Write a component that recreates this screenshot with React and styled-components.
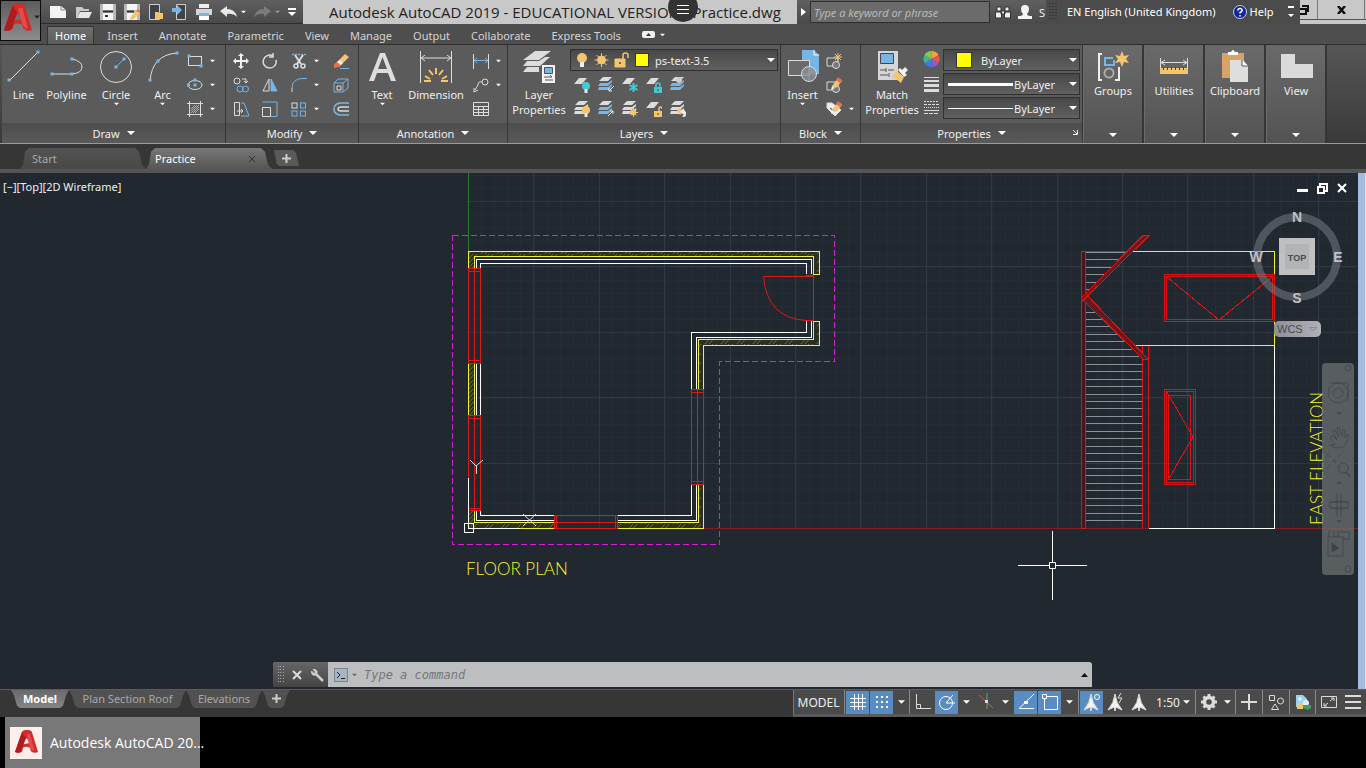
import React from "react";
import styled, { createGlobalStyle, css } from "styled-components";

const GlobalStyle = createGlobalStyle`
  * { box-sizing: border-box; }
  body { margin: 0; background: #000; font-family: "Noto Sans", "Open Sans", sans-serif; font-size: 11px; color: #efefef; }
  button, input, select { font: inherit; color: inherit; }
  button { background: none; border: 0; padding: 0; margin: 0; }
  svg { display: block; flex: none; }
`;

const W = "#dcdcdc";
const B = "#76b5e4";
const Y = "#f3c56f";

/* ---------- shell ---------- */
const Shell = styled.div`
  min-height: 100vh;
  display: flex;
  flex-direction: column;
`;
const Header = styled.header`
  display: grid;
  grid-template-columns: 41px minmax(0, 1fr);
  grid-template-rows: 24px 20px;
  background: #4e4e4e;
  position: relative;
`;
const LogoButton = styled.button`
  grid-row: 1 / 3;
  height: 41px;
  border: 1px solid #0c0c0c;
  background: linear-gradient(#5c5c5c, #8d8d8d);
  display: flex;
  align-items: center;
  padding: 0 0 8px 3px;
  gap: 2px;
`;
const TitleBar = styled.div`
  display: flex;
  background: #c8c8c8;
  overflow: hidden;
`;
const QuickAccess = styled.div`
  width: 262px;
  flex: none;
  display: flex;
  align-items: center;
  gap: 8px;
  padding-left: 8px;
  border-bottom: 1px solid #2c2c2c;
  background: linear-gradient(#5f5f5f, #4a4a4a);
`;
const Pair = styled.span`
  display: flex;
  align-items: center;
  gap: ${(p) => p.$gap || 4}px;
`;
const WindowTitle = styled.h1`
  flex: 1;
  margin: 0;
  padding-left: 26px;
  font-family: "Open Sans", sans-serif;
  font-size: 15px;
  font-weight: 400;
  line-height: 25px;
  color: #222;
  white-space: nowrap;
  overflow: hidden;
`;
const SearchArea = styled.div`
  display: flex;
  flex: none;
  width: 249px;
  background: linear-gradient(#606060, #4a4a4a);
  align-items: center;
  overflow: hidden;
`;
const SearchToggle = styled.button`
  width: 13px;
  flex: none;
  display: flex;
  justify-content: center;
`;
const SearchInput = styled.input`
  width: 180px;
  height: 22px;
  flex: none;
  border: 1px solid #2f2f2f;
  background: #6b6b6b;
  font-style: italic;
  padding: 0 3px;
  margin-right: 5px;
  &::placeholder { color: #b9b9b9; opacity: 1; }
`;
const LanguageBar = styled.div`
  width: 254px;
  flex: none;
  display: flex;
  align-items: center;
  background: #4b4b4b;
  padding-left: 3px;
  line-height: 24px;
  color: #fff;
  white-space: nowrap;
`;
const LanguageName = styled.button`
  margin-left: 9px;
`;
const HelpButton = styled.button`
  display: flex;
  align-items: center;
  gap: 3px;
  margin: 0 14px 0 17px;
`;
const WindowButtons = styled.div`
  display: flex;
  flex: none;
  width: 66px;
  height: 20px;
  border-bottom: 1px solid #555;
`;
const WindowButton = styled.button`
  width: ${(p) => p.$w}px;
  border-right: 1px solid #777;
  display: flex;
  align-items: center;
  justify-content: ${(p) => p.$align || "center"};
`;
const FloatingMenu = styled.button`
  position: absolute;
  left: 50%;
  top: -8px;
  transform: translateX(-50%);
  width: 30px;
  height: 30px;
  border-radius: 50%;
  background: #333;
  display: flex;
  align-items: center;
  justify-content: center;
  padding-top: 5px;
`;
const MenuTabs = styled.nav`
  display: flex;
  gap: 5px;
  padding-left: 6px;
  align-items: flex-end;
`;
const MenuTab = styled.button`
  height: 18px;
  padding: 0 8px;
  line-height: 15px;
  color: #d4d4d4;
  ${(p) => p.$active && css`
    background: linear-gradient(#6e6e6e, #5c5c5c);
    border: 1px solid #343434;
    border-bottom: 0;
    color: #fff;
    padding: 0 7px;
  `}
`;

/* ---------- ribbon ---------- */
const Ribbon = styled.div`
  display: flex;
  height: 100px;
  border-top: 1px solid #2f2f2f;
  border-bottom: 1px solid #9a9a9a;
  padding-left: 2px;
  background: linear-gradient(#565656, #3a3a3a);
  overflow: hidden;
`;
const Panel = styled.section`
  flex: none;
  width: ${(p) => p.$w}px;
  border-right: 1px solid #363636;
  display: flex;
  flex-direction: column;
  background: #5b5b5b;
`;
const PanelBody = styled.div`
  height: 78px;
  display: flex;
  padding-top: 4px;
`;
const PanelTitle = styled.button`
  flex: 1;
  display: flex;
  align-items: center;
  justify-content: center;
  gap: 7px;
  position: relative;
  background: linear-gradient(#4d4d4d, #5a5a5a);
`;
const Launcher = styled.span`
  position: absolute;
  right: 4px;
  top: 6px;
`;
const BigButton = styled.button`
  width: ${(p) => p.$w}px;
  flex: none;
  display: flex;
  flex-direction: column;
  align-items: center;
  line-height: 15px;
  white-space: nowrap;
  height: 72px;
  > svg:first-child { margin-bottom: 4px; }
`;
const ToolGrid = styled.div`
  display: grid;
  grid-template-columns: ${(p) => p.$cols};
  grid-auto-rows: 24px;
  align-content: start;
`;
const Tool = styled.button`
  display: flex;
  align-items: center;
  gap: 7px;
`;
const ComboBox = styled.label`
  width: ${(p) => p.$w}px;
  height: 22px;
  margin-bottom: 2px;
  border: 1px solid #303030;
  background: linear-gradient(#484848, #606060);
  display: flex;
  align-items: center;
  gap: ${(p) => p.$gap}px;
  padding: 0 2px 0 4px;
`;
const Picker = styled.select`
  appearance: none;
  border: 0;
  padding: 0;
  margin: 0;
  background: transparent;
  flex: 1;
  min-width: 0;
  outline: 0;
  option { color: #000; }
`;
const Swatch = styled.span`
  width: ${(p) => (p.$wide ? 16 : 14)}px;
  height: ${(p) => (p.$wide ? 16 : 14)}px;
  background: #ff0;
  border: 1px solid #333;
  flex: none;
  margin: ${(p) => (p.$wide ? "0 5px 0 8px" : "0 1px")};
`;
const LineSample = styled.span`
  width: 65px;
  height: ${(p) => p.$h}px;
  background: #fff;
  flex: none;
`;
const Stack = styled.div`
  display: flex;
  flex-direction: column;
`;
const IconStack = styled(Stack)`
  width: 20px;
  gap: 8px;
  padding-top: 1px;
`;
const SlimPanel = styled.button`
  flex: none;
  width: 61px;
  border-right: 2px solid #363636;
  border-left: 1px solid #6b6b6b;
  background: linear-gradient(#6a6a6a, #535353);
  display: flex;
  flex-direction: column;
  align-items: center;
  padding: 4px 0 6px;
  line-height: 16px;
  > svg:last-child { margin-top: auto; }
`;

/* ---------- document tabs ---------- */
const FileTabs = styled.nav`
  height: 29px;
  background: #363636;
  border-bottom: 4px solid #555;
  display: flex;
  align-items: flex-end;
  padding-left: 20px;
`;
const FileTab = styled.button`
  width: 126px;
  height: 21px;
  display: flex;
  align-items: center;
  justify-content: space-between;
  padding: 0 16px 0 ${(p) => (p.$active ? 9 : 12)}px;
  color: ${(p) => (p.$active ? "#fff" : "#a9a9a9")};
  background: ${(p) => (p.$active ? "linear-gradient(#777, #565656)" : "linear-gradient(#535353, #484848)")};
  clip-path: polygon(0 100%, 3px 80%, 5px 18%, 9px 0, 115px 0, 119px 18%, 122px 80%, 100% 100%);
`;
const FileTabAdd = styled.button`
  width: 25px;
  height: 16px;
  margin: 0 0 3px 2px;
  background: #5a5a5a;
  display: flex;
  align-items: center;
  justify-content: center;
  clip-path: polygon(0 0, 75% 0, 88% 15%, 100% 100%, 20% 100%, 10% 85%);
`;

/* ---------- drawing area ---------- */
const Canvas = styled.main`
  flex: 1;
  min-height: 516px;
  position: relative;
  background: #212830;
  overflow: hidden;
  border-right: 1px solid #d7e2f0;
`;
const Drawing = styled.svg`
  position: absolute;
  inset: 0;
  width: 100%;
  height: 100%;
`;
const ViewLabel = styled.div`
  position: absolute;
  left: 3px;
  top: 6px;
  line-height: 16px;
`;
const ScrollEdge = styled.div`
  position: absolute;
  right: 0;
  top: 0;
  bottom: 0;
  width: 7px;
  background: #a3bcdd;
`;
const DocButtons = styled.div`
  position: absolute;
  right: 18px;
  top: 10px;
  display: flex;
  gap: 9px;
`;
const ViewCube = styled.div`
  position: absolute;
  right: 21px;
  top: 36px;
`;
const WcsButton = styled.button`
  position: absolute;
  right: 44px;
  top: 148px;
  width: 47px;
  height: 16px;
  border-radius: 5px;
  background: linear-gradient(90deg, #8d9096, #b0b0b8);
  font-family: "Liberation Sans", sans-serif;
  color: #474b52;
  display: flex;
  align-items: center;
  gap: 6px;
  padding-left: 3px;
`;
const NavBar = styled.div`
  position: absolute;
  right: 11px;
  top: 190px;
  width: 32px;
  height: 212px;
  border-radius: 4px;
  background: rgba(110, 113, 115, 0.72);
`;
const CommandLine = styled.div`
  position: absolute;
  left: 20%;
  width: 60%;
  bottom: 2px;
  height: 25px;
  display: flex;
  background: #bcbec0;
  border-radius: 3px 3px 0 0;
  overflow: hidden;
  align-items: center;
`;
const CommandHandle = styled.div`
  width: 55px;
  height: 100%;
  background: linear-gradient(#666, #444);
  display: flex;
  align-items: center;
  gap: 8px;
  padding-left: 5px;
`;
const CommandInput = styled.input`
  flex: 1;
  border: 0;
  outline: 0;
  background: transparent;
  font-family: "DejaVu Sans Mono", monospace;
  font-style: italic;
  font-size: 12px;
  padding: 0 7px;
  color: #333;
  &::placeholder { color: #75777a; opacity: 1; }
`;
const CommandPrompt = styled.button`
  display: flex;
  align-items: center;
  gap: 4px;
  padding-left: 6px;
`;

/* ---------- bottom ---------- */
const BottomBar = styled.footer`
  height: 28px;
  display: flex;
  justify-content: space-between;
  background: #363636;
  border-top: 1px solid #5c5c5c;
`;
const LayoutTabs = styled.nav`
  display: flex;
  padding-left: 11px;
`;
const LayoutTab = styled.button`
  height: 18px;
  width: ${(p) => p.$w}px;
  display: flex;
  align-items: center;
  justify-content: center;
  padding-bottom: 2px;
  color: ${(p) => (p.$active ? "#fff" : "#a8a8a8")};
  font-weight: ${(p) => (p.$active ? 700 : 400)};
  background: ${(p) => (p.$active ? "linear-gradient(#6a6a6a, #858585)" : "#515151")};
  clip-path: polygon(0 0, 100% 0, calc(100% - 3px) 30%, calc(100% - 6px) 88%, calc(100% - 9px) 100%, 9px 100%, 6px 88%, 3px 30%);
`;
const StatusBar = styled.div`
  display: flex;
  background: #4a4a4a;
  border-left: 1px solid #777;
  border-bottom: 3px solid #5a5a5a;
  align-items: center;
  gap: 1px;
  padding-right: 2px;
`;
const StatusButton = styled.button`
  width: ${(p) => p.$w || 23}px;
  height: 23px;
  background: ${(p) => (p.$on ? "#5a8cc4" : "transparent")};
  display: flex;
  align-items: center;
  justify-content: center;
  gap: 3px;
  font-size: 12px;
`;
const Separator = styled.span`
  width: 1px;
  align-self: stretch;
  background: #8a8a8a;
`;
const Taskbar = styled.div`
  height: 51px;
  background: #000;
  padding-left: 5px;
  display: flex;
`;
const TaskButton = styled.button`
  width: 195px;
  background: #787878;
  display: flex;
  align-items: center;
  gap: 8px;
  padding-left: 5px;
  font-family: "Open Sans", sans-serif;
  font-size: 14px;
  color: #fff;
  white-space: nowrap;
`;

/* ---------- icons ---------- */
const Icon = ({ w = 16, h = w, vb, children, ...rest }) => (
  <svg width={w} height={h} viewBox={vb || `0 0 ${w} ${h}`} fill="none" stroke={W} aria-hidden="true" {...rest}>
    {children}
  </svg>
);
const Caret = ({ w = 7, color = "#fff" }) => (
  <Icon w={w} h={4} vb="0 0 8 4" stroke="none"><path d="M0 0h8L4 4z" fill={color} /></Icon>
);
const Plus = () => <Icon w={9} stroke="#ccc" strokeWidth="2"><path d="M4.500 0v9M0 4.500h9" /></Icon>;
const Dot = ({ x, y }) => <rect x={x - 1.5} y={y - 1.5} width="3" height="3" fill={B} stroke="none" />;
const ALogo = ({ s = 26 }) => (
  <Icon w={s} vb="0 0 26 26" stroke="none">
    <path d="M0 25 8 2q1-2 4-2h3q3 0 4 2l7 23q-4 2-8-1l-1-4q-5-2-8 0l-1 4q-3 3-8 1zM12.500 9l-3 7 6-1q2-2-3-6z" fill="#cf2a2c" fillRule="evenodd" />
    <path d="M0 25 8 2q3 6 4.500 7l-3 7-2 8q-3 3-7.500 1z" fill="#b01b20" />
    <path d="m13 5 4 15 3 4 2-1-5-19z" fill="#e5494a" />
  </Icon>
);
const LayerStack = ({ blue, children, one }) => {
  const c = blue ? B : W;
  return (
    <Icon stroke="#eee">
      {one
        ? <path d="M5 1h8L8 7H0z" fill={W} stroke="none" />
        : <g stroke="none"><path d="M5 0h9l-4 4H1z" fill={W} /><path d="M2 6h8l4-3v2l-4 4H0z" fill={c} /><path d="M1 10h9l4-3v2l-4 4H0z" fill={c} /></g>}
      {children}
    </Icon>
  );
};
const Bulb = ({ c = Y }) => <g stroke="none"><circle cx="12" cy="9" r="4" fill={c} /><path d="M10.500 12h3v4h-3z" fill="#e8e8e8" /></g>;
const SunSmall = () => <g stroke={Y}><circle cx="11.500" cy="11.500" r="2.500" fill={Y} /><path d="M11.500 7v9M7 11.500h9M8.500 8.500l6 6M14.500 8.500l-6 6" /></g>;
const Lock = ({ c, open }) => <><path d={open ? "M13 10V8q0-2 1.500-2T16 8" : "M10 10V8q0-2 2-2t2 2v2"} stroke={c} strokeWidth="1.500" /><rect x="8" y="10" width="8" height="6" fill={c} stroke="none" /><path d="M12 12v2" stroke="#444" /></>;
const Pencil = () => <><path d="m6 9 6-8 4 3-6 7z" fill={Y} stroke="none" /><path d="m12 0 4 3-2 3-4-3z" fill="#e46b5c" stroke="none" /><path d="m6 9-1 4 4-2z" fill="#eee" stroke="none" /></>;
const Annot = ({ children }) => (
  <Icon w={20}>
    <path d="M9 2Q8 11 2 18l6-3 1 4 1-4 6 3Q10 11 9 2z" fill="#f3f3f3" />
    {children}
  </Icon>
);

const Combo = ({ label, w, gap, value, children }) => (
  <ComboBox $w={w} $gap={gap}>
    {children}
    <Picker aria-label={label} defaultValue={value}><option>{value}</option></Picker>
    <Caret w={8} />
  </ComboBox>
);

/* ---------- top sections ---------- */
function Top() {
  return (
    <Header>
      <LogoButton aria-label="Application menu"><ALogo s={28} /><Caret w={6} color="#222" /></LogoButton>
      <TitleBar>
        <QuickAccess>
          <button aria-label="New"><Icon w={18} h={16} stroke="none"><path d="M1 2h11l5 4v8H1z" fill="#f4f4f4" /><path d="M12 2v4h5" stroke="#888" /></Icon></button>
          <button aria-label="Open"><Icon w={17} h={16} stroke="none"><path d="M1 3h6l2 2h5v2H5l-3 7H1z" fill="#c9c9c9" /><path d="M5 8h12l-3 6H2z" fill="#e6e6e6" /></Icon></button>
          <button aria-label="Save"><Icon w={16} stroke="none"><path d="M0 0h16v16H0z" fill="#b9b9b9" /><path d="M3 0h10v6H3zM3 9h10v7H3z" fill="#f6f6f6" /><path d="M3 7.500h10M5 12h3" stroke="#333" strokeWidth="2" /></Icon></button>
          <button aria-label="Save as"><Icon w={16} stroke="none"><path d="M0 0h16v16H0z" fill="#b9b9b9" /><path d="M3 0h10v6H3zM3 9h10v7H3z" fill="#f6f6f6" /><path d="M3 7.500h7" stroke="#333" strokeWidth="2" /><path d="m7 12 6-6 3 3-6 6-4 1z" fill={Y} /><path d="m12 7 2-2 2 2v2z" fill="#e46b5c" /></Icon></button>
          <button aria-label="Open from mobile"><Icon w={16} stroke="none"><path d="M1.500 0.500h10v15h-10z" stroke="#ccc" fill="#3f4246" /><path d="M7 8h3l1 1h4v6H7z" fill={Y} /></Icon></button>
          <button aria-label="Save to mobile"><Icon w={16} stroke="none"><path d="M4.500 0.500h9v15h-9z" stroke="#ccc" fill="#3f4246" /><path d="M0 4h5V1l5 5-5 5V8H0z" fill={B} /></Icon></button>
          <button aria-label="Plot"><Icon w={16} stroke="none"><path d="M3 0h10v4H3z" fill="#eee" /><path d="M0 5h16v6H0z" fill="#d6d6d6" /><path d="M3 9h10v3H3z" fill={B} /><path d="M3 12h10v4H3z" fill="#fff" /></Icon></button>
          <Pair><button aria-label="Undo"><Icon w={17} h={14} stroke="none"><path d="M0 6 7 1v3q8 0 10 8-4-4-10-3v3z" fill="#e9e9e9" /></Icon></button><Caret w={5} /></Pair>
          <Pair><button aria-label="Redo"><Icon w={17} h={14} stroke="none"><path d="m17 6-7-5v3Q2 4 0 12q4-4 10-3v3z" fill="#7b7b7b" /></Icon></button><Caret w={5} color="#999" /></Pair>
          <button aria-label="Customise"><Icon w={8} h={8} stroke="none"><path d="M0 0h8v2H0zM0 4h8L4 8z" fill="#fff" /></Icon></button>
        </QuickAccess>
        <WindowTitle>Autodesk AutoCAD 2019 - EDUCATIONAL VERSION - Practice.dwg</WindowTitle>
        <SearchArea>
          <SearchToggle aria-label="Toggle search"><Icon w={5} h={8} stroke="none"><path d="M0 0v8l5-4z" fill="#fff" /></Icon></SearchToggle>
          <SearchInput aria-label="Search help" placeholder="Type a keyword or phrase" />
          <Pair $gap={7}>
            <button aria-label="Find"><Icon w={16}><path d="M2 3h4v4H2zM10 3h4v4h-4zM.500 8h6v6h-6zM9.500 8h6v6h-6zM6 7h4v3H6z" fill="#eee" stroke="#333" /></Icon></button>
            <button aria-label="Account"><Icon w={14} h={16} stroke="none"><path d="M7 1q4 0 4 4 0 3-2 5 0 2 5 2v3H0v-3q5 0 5-2-2-2-2-5 0-4 4-4z" fill="#f4f4f4" /></Icon></button>
            <span>S</span>
          </Pair>
        </SearchArea>
        <LanguageBar>
          <Icon w={9} h={20} stroke="#222" strokeDasharray="1 2"><path d="M1 1v18M4 1v18M7 1v18" /></Icon>
          <LanguageName>EN English (United Kingdom)</LanguageName>
          <HelpButton>
            <Icon w={14} stroke="none"><circle cx="7" cy="7" r="6.500" fill="#13259c" stroke="#c9cde8" /><path d="M4.800 5.500Q5 3.500 7 3.500t2.200 2Q9.200 6.500 7 7.500v1M7 10v1.500" stroke="#fff" strokeWidth="1.500" /></Icon>
            Help
          </HelpButton>
          <Icon w={6} h={14} stroke="none"><path d="M0 1h6v2H0zM0 9h6l-3 3z" fill="#fff" /></Icon>
        </LanguageBar>
        <WindowButtons>
          <WindowButton $w={18} $align="flex-start" aria-label="Restore"><Icon w={9} h={10} stroke="#111" strokeWidth="2"><path d="M0 4h6v5H0M2 1h6v6" /></Icon></WindowButton>
          <WindowButton $w={47} aria-label="Close"><Icon w={9} h={8} stroke="#111" strokeWidth="2.500"><path d="m1 0 7 8M8 0 1 8" /></Icon></WindowButton>
        </WindowButtons>
      </TitleBar>
      <MenuTabs>
        {["Home", "Insert", "Annotate", "Parametric", "View", "Manage", "Output", "Collaborate", "Express Tools"].map((t, i) => (
          <MenuTab key={t} $active={i === 0}>{t}</MenuTab>
        ))}
        <MenuTab aria-label="Minimise ribbon">
          <Pair $gap={5}>
            <Icon w={13} h={18} stroke="none"><rect y="5" width="13" height="7" rx="2" fill="#f0f0f0" /><path d="M4 10h5L6.500 7z" fill="#333" /></Icon>
            <Caret w={5} />
          </Pair>
        </MenuTab>
      </MenuTabs>
      <FloatingMenu aria-label="Menu"><Icon w={12} h={9} stroke="#fff"><path d="M0 .500h12M0 4.500h12M0 8.500h12" /></Icon></FloatingMenu>
    </Header>
  );
}

const PanelFooter = ({ children, launcher }) => (
  <PanelTitle>
    {children}<Caret w={8} />
    {launcher && <Launcher><Icon w={6}><path d="M1 1l4 4M5.500 1v4.500H1" stroke="#eee" /></Icon></Launcher>}
  </PanelTitle>
);

function RibbonPanels() {
  return (
    <Ribbon>
      <Panel $w={224}>
        <PanelBody>
          <BigButton $w={43}><Icon w={34}><path d="M2 32 31 3" /><Dot x={2} y={31} /><Dot x={31} y={3} /></Icon>Line</BigButton>
          <BigButton $w={43}><Icon w={34}><path d="M2 25h20q10-1 10-7T22 10" /><Dot x={2} y={25} /><Dot x={22} y={25} /><Dot x={22} y={10} /></Icon>Polyline</BigButton>
          <BigButton $w={56}><Icon w={34}><circle cx="17" cy="18" r="15.500" /><path d="m17 18 8-8" stroke={B} /><Dot x={17} y={18} /><Dot x={25} y={10} /></Icon>Circle<Caret w={5} /></BigButton>
          <BigButton $w={37}><Icon w={34}><path d="M4 32Q6 6 31 4" /><Dot x={4} y={31} /><Dot x={12} y={12} /><Dot x={31} y={4} /></Icon>Arc<Caret w={5} /></BigButton>
          <ToolGrid $cols="6px 38px">
            <i /><Tool aria-label="Rectangle"><Icon><rect x="1.500" y="3.500" width="13" height="9" /><Dot x={2} y={3} /><Dot x={14} y={13} /></Icon><Caret w={5} /></Tool>
            <i /><Tool aria-label="Ellipse"><Icon><ellipse cx="8" cy="8" rx="7" ry="4.500" /><Dot x={8} y={8} /><Dot x={1.500} y={8} /><Dot x={8} y={3} /></Icon><Caret w={5} /></Tool>
            <i /><Tool aria-label="Hatch"><Icon><path d="M2.500 0v16M13.500 0v16M0 2.500h16M0 13.500h16" /><path d="m4 8 4-4M4 12l8-8M8 12l4-4M4 10l6-6M6 12l6-6" stroke={B} /></Icon><Caret w={5} /></Tool>
          </ToolGrid>
        </PanelBody>
        <PanelFooter>Draw</PanelFooter>
      </Panel>

      <Panel $w={133}>
        <PanelBody>
          <ToolGrid $cols="7px 29px 29px 42px 26px">
            <i /><Tool aria-label="Move"><Icon stroke="none"><path d="m8 0 3 3H9v4h4V5l3 3-3 3V9H9v4h2l-3 3-3-3h2V9H3v2L0 8l3-3v2h4V3H5z" fill="#f2f2f2" /></Icon></Tool>
            <Tool aria-label="Rotate"><Icon strokeWidth="1.500"><path d="M11 3a6.500 6.500 0 1 0 3 4M11 0v4H7" /></Icon></Tool>
            <Tool aria-label="Trim"><Icon strokeWidth="1.500"><path d="M1 1.500h14" stroke={B} strokeDasharray="2 1" /><path d="m4 2 6 9M12 2l-6 9" strokeWidth="2" /><circle cx="5" cy="13" r="2" /><circle cx="12" cy="13" r="2" /></Icon><Caret w={5} /></Tool>
            <Tool aria-label="Erase"><Icon stroke="none"><path d="M1 12 12 1l4 3L6 14z" fill={Y} /><path d="m1 12 3-3 4 3-2 2-5 1z" fill="#e86a58" /><path d="m4 9 3-2 3 3-2 2z" fill="#eee" /><path d="M7 15.500h9" stroke={B} /></Icon></Tool>
            <i /><Tool aria-label="Copy"><Icon><circle cx="4" cy="4" r="3" /><path d="M9 2h4v4m-2-2 2 2 2-2" /><circle cx="7" cy="12" r="3" stroke={B} /><circle cx="12.500" cy="12" r="3" stroke={B} /></Icon></Tool>
            <Tool aria-label="Mirror"><Icon><path d="M7 2v12H1z" /><path d="M9 2v12h6z" fill={B} stroke={B} /></Icon></Tool>
            <Tool aria-label="Fillet"><Icon><path d="M1 15v-4" stroke={W} /><path d="M1 11q0-9 10-9.500h5" stroke={B} /></Icon><Caret w={5} /></Tool>
            <Tool aria-label="Explode"><Icon stroke={B}><path d="M1 6h9v9H1zM1 6l4-4h10l-5 4M10 15l5-4V2" /><path d="M4 9h4v4H4z" stroke={W} /></Icon></Tool>
            <i /><Tool aria-label="Stretch"><Icon><path d="M1.500 1.500h5v13h-5zM4 10h6M8 8l2 2-2 2" /><path d="M8 2h3l5 13H8" stroke={B} /></Icon></Tool>
            <Tool aria-label="Scale"><Icon><path d="M.500 1h14.500v14.500H9" stroke={B} /><path d="M.500 6.500h8v9h-8z" /></Icon></Tool>
            <Tool aria-label="Array"><Icon><rect x="1" y="2" width="5" height="5" /><g stroke={B}><rect x="9.500" y="2" width="5" height="5" /><rect x="1" y="10" width="5" height="5" /><rect x="9.500" y="10" width="5" height="5" /></g></Icon><Caret w={5} /></Tool>
            <Tool aria-label="Offset"><Icon stroke={B} strokeWidth="1.500"><path d="M16 2H7Q1 3 1 8t6 6h9" /><path d="M16 6H8Q5 6 5 8t3 2h8" stroke={W} /></Icon></Tool>
          </ToolGrid>
        </PanelBody>
        <PanelFooter>Modify</PanelFooter>
      </Panel>

      <Panel $w={149}>
        <PanelBody>
          <BigButton $w={46}><Icon w={34} stroke="none"><path d="M4 32 15 4h5l11 28h-5l-3-8H12l-3 8zm9-12h9L17.500 8z" fill="#dedede" fillRule="evenodd" /></Icon>Text<Caret w={5} /></BigButton>
          <BigButton $w={62}><Icon w={34}><path d="M1.500 2v32M32.500 2v32M2 9h30M6 6 2 9l4 3M28 6l4 3-4 3" /><path d="M17 19v6M10 21l4 5M24 21l-4 5M6 27l5 3M28 27l-5 3M5 32h7M22 32h7" stroke={Y} strokeWidth="2" /></Icon>Dimension</BigButton>
          <ToolGrid $cols="6px 34px">
            <i /><Tool aria-label="Linear"><Icon><path d="M.500 1v15M15.500 1v15" /><path d="M1 7.500h14M4 5 1 7.500 4 10M12 5l3 2.500L12 10" stroke={B} /></Icon><Caret w={5} /></Tool>
            <i /><Tool aria-label="Leader"><Icon><circle cx="12" cy="5" r="3" /><path d="M9 5Q5 4 5 8l-3 5M1 11v4l4-2" /></Icon><Caret w={5} /></Tool>
            <i /><Tool aria-label="Table"><Icon><path d="M.500 1.500h15v13H.500zM.500 5.500h15M.500 8.500h15M.500 11.500h15M5.500 5v10M10.500 5v10" /></Icon></Tool>
          </ToolGrid>
        </PanelBody>
        <PanelFooter>Annotation</PanelFooter>
      </Panel>

      <Panel $w={273}>
        <PanelBody>
          <BigButton $w={62}>
            <Icon w={34} stroke="none"><path d="M13 2h16l-12 9H1zM5 12h12l6-4h5l-10 9H1zM5 18h12v5H1z" fill="#dcdcdc" /><path d="M20 16h13v18H20z" fill="#f4f4f4" /><path d="M22.500 18.500h8v6h-8z" fill={B} stroke="#456" /><path d="M22 28h8M28 26l2 2M23 31h8" stroke="#555" /></Icon>
            <span>Layer<br />Properties</span>
          </BigButton>
          <Stack>
            <Combo label="Layer" w={208} gap={5} value="ps-text-3.5">
              <Icon w={14} h={16} stroke="none"><circle cx="7" cy="6" r="5" fill={Y} /><path d="M5 10h4v5H5z" fill="#eee" /></Icon>
              <Icon w={15} h={16} stroke={Y}><circle cx="7.500" cy="8" r="4" fill={Y} /><path d="M7.500 1v14M.500 8h14M2.500 3l10 10M12.500 3l-10 10" /></Icon>
              <Icon w={15} h={16} stroke={Y}><path d="M9 7V3q0-2 2.500-2T14 3v3" strokeWidth="1.500" /><path d="M1 7h10v8H1z" fill={Y} /><circle cx="6" cy="11" r="1" fill="#444" stroke="none" /></Icon>
              <Swatch />
            </Combo>
            <ToolGrid $cols="4px repeat(5, 24px)">
              <i /><Tool aria-label="Layer off"><LayerStack one><Bulb c="#45c8cf" /></LayerStack></Tool>
              <Tool aria-label="Isolate"><LayerStack blue><path d="m16 9-5 5m0-3v3h3" /></LayerStack></Tool>
              <Tool aria-label="Freeze"><LayerStack one><g stroke="#45c8cf" strokeWidth="2"><path d="M11.500 6v9M7.500 8l8 5M15.500 8l-8 5" /></g></LayerStack></Tool>
              <Tool aria-label="Lock"><LayerStack one><Lock c="#45c8cf" /></LayerStack></Tool>
              <Tool aria-label="Make current"><LayerStack blue><circle cx="9" cy="3" r="3" fill="#ccc" stroke="none" /></LayerStack></Tool>
              <i /><Tool aria-label="Layers on"><LayerStack><Bulb /></LayerStack></Tool>
              <Tool aria-label="Unisolate"><LayerStack blue><path d="m10 15 5-5m-3 0h3v3" /></LayerStack></Tool>
              <Tool aria-label="Thaw"><LayerStack><SunSmall /></LayerStack></Tool>
              <Tool aria-label="Unlock"><LayerStack one><Lock c={Y} open /></LayerStack></Tool>
              <Tool aria-label="Match layer"><LayerStack><path d="m7 9 3-2 3 4-3 3z" fill={Y} stroke="none" /><path d="m11 10 3 3m-1-4 3 4-3 3" strokeWidth="2" /></LayerStack></Tool>
            </ToolGrid>
          </Stack>
        </PanelBody>
        <PanelFooter>Layers</PanelFooter>
      </Panel>

      <Panel $w={80}>
        <PanelBody>
          <BigButton $w={43}><Icon w={34}><path d="M16 1h12l5 5v19H16z" fill={B} stroke="none" /><path d="M28 1v5h5" stroke="#fff" /><path d="M2.500 11.500h21v15h-21z" fill="#6b6b6b" /><circle cx="23" cy="25" r="7.500" fill="#8b8f93" fillOpacity=".8" /><path d="M16 25h14M23 18v14" stroke="#999" /></Icon>Insert<Caret w={5} /></BigButton>
          <ToolGrid $cols="2px 34px">
            <i /><Tool aria-label="Create block"><Icon><path d="M1 5h11v8H1z" /><circle cx="10" cy="12" r="3.500" fill="#777" /><path d="M12 0v8M8 4h8M9 1l6 6M15 1 9 7" stroke={Y} /></Icon></Tool>
            <i /><Tool aria-label="Edit block"><Icon><path d="M1 5h11v8H1z" /><circle cx="10" cy="12" r="3.500" fill="#777" /><Pencil /></Icon></Tool>
            <i /><Tool aria-label="Attributes"><Icon><path d="M1 2h5l9 7-6 6-8-8z" fill="#eee" /><path d="m4 7 4 3 4-2" stroke="#333" /><Pencil /></Icon><Caret w={5} /></Tool>
          </ToolGrid>
        </PanelBody>
        <PanelFooter>Block</PanelFooter>
      </Panel>

      <Panel $w={222}>
        <PanelBody>
          <BigButton $w={62}>
            <Icon w={34} stroke="none"><path d="M3 2h20v29H3z" fill="#d6d6d6" /><path d="M5.500 4.500h13v10h-13z" fill={B} stroke="#445" /><path d="M5 21h6M13 21h6M5 26h8M11 19v4M14 24v4" stroke="#555" /><path d="m17 27 5-5 7 6-3 6z" fill={Y} /><path d="m23 21 2-2 2 2 3-3 3 3-3 3 2 2-3 2z" fill="#f2f2f2" /></Icon>
            <span>Match<br />Properties</span>
          </BigButton>
          <IconStack>
            <Icon w={17} h={18} stroke="none"><path d="M8.500 9V1a8 8 0 0 1 7 4z" fill="#f4a340" /><path d="m8.500 9 7-4a8 8 0 0 1 0 8z" fill="#e8554d" /><path d="m8.500 9 7 4a8 8 0 0 1-7 4z" fill="#8e5bd0" /><path d="M8.500 9v8a8 8 0 0 1-7-4z" fill="#3f7be0" /><path d="m8.500 9-7 4a8 8 0 0 1 0-8z" fill="#3cb98c" /><path d="m8.500 9-7-4a8 8 0 0 1 7-4z" fill="#8fc64a" /></Icon>
            <Icon w={17} h={16}><path d="M1 1.500h15" /><path d="M1 5h15" strokeWidth="2" /><path d="M1 9.500h15" strokeWidth="3" /><path d="M1 14.500h15" strokeWidth="3" /></Icon>
            <Icon w={17} h={16}><path d="M1 1.500h15" strokeDasharray="2 1" /><path d="M1 4.500h15" strokeDasharray="3 1" /><path d="M1 7.500h15" strokeDasharray="1 1" /><path d="M1 10.500h15" /><path d="M1 13.500h15" strokeDasharray="4 1" /></Icon>
          </IconStack>
          <Stack>
            <Combo label="Colour" w={137} value="ByLayer" gap={4}><Swatch $wide /></Combo>
            <Combo label="Lineweight" w={137} value="ByLayer" gap={1}><LineSample $h={3} /></Combo>
            <Combo label="Linetype" w={137} value="ByLayer" gap={1}><LineSample $h={1} /></Combo>
          </Stack>
        </PanelBody>
        <PanelFooter launcher>Properties</PanelFooter>
      </Panel>

      <SlimPanel>
        <Icon w={34}><path d="M6 5H3v26h3M19 31h4V18" strokeWidth="2" stroke="#eee" /><path d="M17 9h-8v7h9v-5" stroke={B} strokeWidth="2" /><circle cx="13" cy="24" r="4.500" stroke="#aaa" strokeWidth="2" /><path d="m26 2 2 5 5-1-3 4 3 4-5-1-2 5-2-5-5 1 3-4-3-4 5 1z" fill={Y} stroke="none" /></Icon>
        Groups<Caret w={8} />
      </SlimPanel>
      <SlimPanel>
        <Icon w={34}><path d="M3.500 9v14M30.500 9v14M4 13.500h26M8 11l-4 2.500L8 16M26 11l4 2.500-4 2.500" /><path d="M3 19h28v6H3z" fill={Y} stroke="none" /><path d="M6.500 18v3M10.500 18v3M14.500 18v3M18.500 18v3M22.500 18v3M26.500 18v3" stroke="#444" /></Icon>
        Utilities<Caret w={8} />
      </SlimPanel>
      <SlimPanel>
        <Icon w={34} stroke="none"><path d="M4 4h22v25H4z" fill="#d6a468" /><path d="M10 3h3q2-4 4 0h3v3H10z" fill="#fff" /><path d="M12 11h13l5 6v16H12z" fill="#dedede" /><path d="M24 11v6h6" stroke="#555" fill="#fff" /></Icon>
        Clipboard<Caret w={8} />
      </SlimPanel>
      <SlimPanel>
        <Icon w={34} stroke="none"><path d="M2 5h14v10h18v14H2z" fill="#dadada" /></Icon>
        View<Caret w={8} />
      </SlimPanel>
    </Ribbon>
  );
}

/* ---------- drawing ---------- */
const steps = (from, to, step) => {
  const out = [];
  for (let v = from; v <= to; v += step) out.push(Math.round(v) + 0.5);
  return out;
};
const grid = (xs, ys) => xs.map((x) => `M${x} 0V355`).join("") + ys.map((y) => `M468 ${y}H1358`).join("");
const siding = steps(79, 350, 7.45).map((y) => {
  const reach = Math.min(56, Math.abs(y - 125.5) - 5);
  return reach > 2 ? `M1086 ${y}h${reach}` : "";
}).join("");

function FloorPlan() {
  return (
    <g shapeRendering="crispEdges">
      <path d="M452.500 62.500H834.500V188.500H719.500V371.500H452.500z" stroke="#d222d2" strokeDasharray="6 3" />
      <g fill="url(#hatch)" stroke="none">
        <path d="M468 78H820V102H813V84H474V96H468zM813 148h7v25H704v44h-5v-51H813zM468 190h6v53h-6zM699 312h5v44H618v-6h81zM468 338h6v12h81v6h-87z" />
      </g>
      <path d="M468.500 96V78.500H819.500V101.500H813.500V83.500H474.500V96M813 148.500h6.500v24H703.500V216M813.500 148V166.500H698.500V216M468.500 190v53M474.500 190v53M703.500 312V355.500H618M698.500 312V349.500H618M554 355.500H520M554 349.500H474.500V338" stroke="#f0f03c" />
      <path d="M476.500 96V86.500H811.500V101M480.500 96V90.500H806.500V101M811.500 148V164.500H696.500V216M806.500 148V159.500H691.500V216M476.500 190v53M480.500 190v53M696.500 312V347.500H618M691.500 312V342.500H618M554 347.500H476.500V338M554 342.500H480.500V338" stroke="#fff" />
      <g stroke="#dd1a1a">
        <path d="M468.500 95.500h12v95h-12zM474.500 95v95M468 98.500h12M468 187.500h12" />
        <path d="M468.500 242.500h12v95h-12zM474.500 242v95M468 245.500h12M468 335.500h12" />
        <path d="M691.500 216.500h12v95h-12zM697.500 216v95M691 219.500h12M691 308.500h12" />
        <path d="M554.500 342.500h63v13h-63zM554 349.500h63M556.500 342v13M615.500 342v13" />
        <path d="M806 102.500h7v45h-7M813 103.500H763.500" />
        <path d="M763.500 103.500Q767 145 806 147.500" shapeRendering="auto" />
      </g>
      <path d="M468.500 305V355.500H520M464.500 350.500h9v9h-9z" stroke="#fff" />
      <path d="m523 341 13 12M536 341l-13 12M470 287l6 6 7-6M476.500 293v8" stroke="#ddd" shapeRendering="auto" />
    </g>
  );
}

function Elevation() {
  return (
    <g shapeRendering="crispEdges">
      <path d={siding} stroke="#8d9196" />
      <path d="M1132 78.500H1274.500V172.500H1132" stroke="#f0f020" />
      <path d="M1274.500 172V355.500H1149" stroke="#fff" />
      <g stroke="#dd1414">
        <path d="M1128 78.500H1081M1081.500 78.500h4v277h-4z" fill="#4c151b" />
        <path d="M1142.500 173V355M1148.500 173V355" />
        <path d="M1081 125l62-62.500h6l-67 66M1086 121l62 65h-5l-62-61" fill="#651920" />
        <path d="M1164.500 101.500h110v47h-110zM1166.500 103.500h106v43h-106zM1167 104l52 43 53-43" />
        <path d="M1164.500 216.500h31v95h-31zM1166.500 218.500h27v91h-27zM1168.500 222.500h22v84h-22zM1167 219l26 45-25 43" />
      </g>
    </g>
  );
}

function Model() {
  return (
    <Drawing fill="none" role="img" aria-label="Floor plan and east elevation">
      <defs>
        <pattern id="hatch" width="16" height="9" patternUnits="userSpaceOnUse">
          <rect width="16" height="9" fill="#2b3021" /><path d="M1 9 9 0M5 9l8-9" stroke="#696c40" />
        </pattern>
      </defs>
      <path d={grid(steps(468, 1357, 13.1), steps(2, 355, 13.1))} stroke="#242c36" shapeRendering="crispEdges" />
      <path d={grid(steps(468, 1357, 65.4), steps(28, 355, 65.4))} stroke="#2f3845" shapeRendering="crispEdges" />
      <path d="M704 355.500H1358" stroke="#7c2026" />
      <path d="M468.500 0V79" stroke="#2c7a2e" />
      <FloorPlan />
      <Elevation />
      <g fill="#f6f62a" fontFamily="Lato, sans-serif" fontWeight="300" fontSize="17">
        <text x="466" y="402">FLOOR PLAN</text>
        <text transform="translate(1323 352) rotate(-90)">EAST ELEVATION</text>
      </g>
      <path d="M1018 392.500h31M1056 392.500h31M1052.500 358v31M1052.500 396v31M1049.500 389.500h6v6h-6z" stroke="#fff" />
    </Drawing>
  );
}

function Workspace() {
  return (
    <Canvas>
      <Model />
      <ViewLabel>[−][Top][2D Wireframe]</ViewLabel>
      <ScrollEdge />
      <DocButtons>
        <button aria-label="Minimise drawing"><Icon w={11} h={11} stroke="#fff" strokeWidth="3"><path d="M0 7.500h11" /></Icon></button>
        <button aria-label="Restore drawing"><Icon w={11} h={11} stroke="#fff" strokeWidth="2"><path d="M1 4h6v6H1zM3 3V1h7v7H8" /></Icon></button>
        <button aria-label="Close drawing"><Icon w={10} h={11} stroke="#fff" strokeWidth="2"><path d="m1 1 8 8M9 1 1 9" /></Icon></button>
      </DocButtons>
      <ViewCube>
        <Icon w={96} stroke="none" fontFamily="Liberation Sans, sans-serif" fontWeight="700" fontSize="14" textAnchor="middle">
          <circle cx="49" cy="48" r="40" stroke="#767a82" strokeOpacity=".55" strokeWidth="8" />
          <path d="M31 29h36v37H31z" fill="#bfc0c2" /><path d="M37 35h24v25H37z" fill="#b3b4b6" />
          <text x="49" y="52" fontSize="9" fill="#444b55">TOP</text>
          <g fill="#bfc2c6"><text x="49" y="13">N</text><text x="49" y="94">S</text><text x="8" y="53">W</text><text x="90" y="53">E</text></g>
        </Icon>
      </ViewCube>
      <WcsButton>WCS<Icon w={8} h={4} stroke="#8a8d96"><path d="M0 .500h8L4 3.500z" /></Icon></WcsButton>
      <NavBar>
        <Icon w={32} h={212} stroke="#3f4448" strokeOpacity=".75">
          <circle cx="26" cy="5" r="3" /><circle cx="16" cy="30" r="10" /><circle cx="16" cy="30" r="5" /><path d="M8 20h18v18" />
          <path d="m13 82-5-8 3-1 4 4-5-9 2-2 5 8-2-9 2-1 3 9 1-7 2 1 0 8 3-4 1 1-3 8q-2 5-8 5-5 0-8-3z" />
          <path d="m5 91 14 14M5 105l14-14" strokeDasharray="5 3" /><circle cx="21" cy="105" r="5" /><path d="m24 109 4 5" strokeWidth="2" />
          <ellipse cx="17" cy="142" rx="10" ry="4" /><path d="M15 130v24M19 130v24M7 139h20M7 145h20" />
          <rect x="6" y="174" width="15" height="19" /><path d="m10 180 7 5-7 4z" fill="#3f4448" /><path d="M7 168v6M12 168v6M16 168v6M17 169h10v7H21" />
          <circle cx="26" cy="206" r="3" /><path d="M15 50h4M15 120h4M15 158h4" strokeWidth="2" />
        </Icon>
      </NavBar>
      <CommandLine>
        <CommandHandle>
          <Icon w={6} h={17} stroke="#aaa" strokeDasharray="1 2"><path d="M.500 0v17M2.500 0v17M5.500 0v17" /></Icon>
          <button aria-label="Close command line"><Icon w={10} stroke="#ddd" strokeWidth="2"><path d="m1 1 8 8M9 1 1 9" /></Icon></button>
          <button aria-label="Customise"><Icon w={14} stroke="#ccc" strokeWidth="2.500"><path d="m6 6 7 7" /><path d="M3 1.500 5.500 4 4 5.500 1.500 3Q1 7 4.500 7.500 8 6 7 3 6 1 3 1.500z" fill="#ccc" strokeWidth="1" /></Icon></button>
        </CommandHandle>
        <CommandPrompt aria-label="Recent commands">
          <Icon w={14}><rect x=".500" y=".500" width="13" height="13" fill="#a9b4c3" stroke="#7a8390" /><path d="m3 4 3 3-3 3M7 10.500h4" stroke="#222" /></Icon>
          <Caret w={5} color="#666" />
        </CommandPrompt>
        <CommandInput aria-label="Command" placeholder="Type a command" />
        <Icon w={11} h={4} stroke="none"><path d="M0 4h7L3.500 0z" fill="#111" /></Icon>
      </CommandLine>
    </Canvas>
  );
}

function Status() {
  const drop = (w = 15) => <StatusButton $w={w} aria-label="Options"><Caret w={7} /></StatusButton>;
  return (
    <StatusBar>
      <StatusButton $w={49}>MODEL</StatusButton>
      <Separator />
      <StatusButton $on aria-label="Grid"><Icon w={16} stroke="#fff"><path d="M4.500 0v16M8.500 0v16M12.500 0v16M0 4.500h16M0 8.500h16M0 12.500h16" /></Icon></StatusButton>
      <StatusButton $on aria-label="Snap"><Icon w={16} stroke="#fff" strokeWidth="2" strokeDasharray="2 3"><path d="M2 3h13M2 8h13M2 13h13" /></Icon></StatusButton>
      {drop(14)}<Separator />
      <StatusButton aria-label="Ortho"><Icon w={16}><path d="M1.500 0v14.500H16M1.500 10.500h4v4" /></Icon></StatusButton>
      <StatusButton $on aria-label="Polar"><Icon w={18} stroke="#fff"><circle cx="8" cy="10" r="6.500" /><path d="M8 10h9M8 10l7-8" /></Icon></StatusButton>
      {drop(14)}
      <StatusButton aria-label="Isometric"><Icon w={18}><path d="M10 0v16" stroke="#4fb35e" /><path d="m2 2 14 13" stroke="#c0605c" /><rect x="8" y="7" width="3" height="3" fill="#ddd" stroke="none" /></Icon></StatusButton>
      {drop()}
      <StatusButton $on aria-label="Object snap tracking"><Icon w={18} stroke="#fff"><path d="M17 1 2 15.500h15" /><path d="M7 8h4v3H7z" fill="#fff" stroke="none" /></Icon></StatusButton>
      <StatusButton $on aria-label="Object snap"><Icon w={18} stroke="#fff"><path d="M1.500 1.500h4v4h-4zM6 3.500h10.500v13H3.500V6" /></Icon></StatusButton>
      {drop()}<Separator />
      <StatusButton $on aria-label="Annotation visibility"><Annot><circle cx="15" cy="5" r="2.500" stroke="#fff" /></Annot></StatusButton>
      <StatusButton aria-label="Auto scale"><Annot><path d="m15 1-3 5h4l-3 5" /></Annot></StatusButton>
      <StatusButton aria-label="Annotation scale"><Annot /></StatusButton>
      <StatusButton $w={42}>1:50<Caret w={7} /></StatusButton>
      <Separator />
      <StatusButton aria-label="Workspace"><Icon w={18}><circle cx="9" cy="9" r="4.500" strokeWidth="3.500" /><path d="M9 1v3M9 14v3M1 9h3M14 9h3M3.500 3.500l2 2M12.500 12.500l2 2M14.500 3.500l-2 2M5.500 12.500l-2 2" strokeWidth="3" /></Icon></StatusButton>
      {drop(13)}<Separator />
      <StatusButton $w={24} aria-label="Monitor"><Icon w={16} strokeWidth="2"><path d="M8 0v16M0 8h16" /></Icon></StatusButton>
      <Separator />
      <StatusButton $w={24} aria-label="Isolate"><Icon w={16}><path d="M1.500 1.500h5v5h-5zM7 10l3.500 5.500h-7z" /><circle cx="12.500" cy="7" r="3" /></Icon></StatusButton>
      <Separator />
      <StatusButton aria-label="Performance"><Icon w={16} stroke="none"><path d="M1 1h7l4 4v8H1z" fill="#9bd2f3" /><path d="M3 5h4M5 3v4" stroke="#fff" /><circle cx="11" cy="9" r="3" fill="#e3eef8" /><path d="M2 9h6v6H2z" fill={Y} /><path d="M8 11h8v3l-3 2-5-2z" fill="#3aa655" /></Icon></StatusButton>
      <Separator />
      <StatusButton aria-label="Clean screen"><Icon w={16} h={14}><path d="M.500 1.500h15v11H.500zM9 6l4-3m-3 0h3v3M7 8l-4 3m3 0H3V8" /></Icon></StatusButton>
      <StatusButton aria-label="Customisation"><Icon w={16} strokeWidth="2"><path d="M0 2h16M0 8h16M0 14h16" /></Icon></StatusButton>
    </StatusBar>
  );
}

export default function App() {
  return (
    <Shell>
      <GlobalStyle />
      <Top />
      <RibbonPanels />
      <FileTabs>
        <FileTab>Start</FileTab>
        <FileTab $active>Practice<Icon w={8} stroke="#333"><path d="m1 1 6 6M7 1 1 7" /></Icon></FileTab>
        <FileTabAdd aria-label="New drawing"><Plus /></FileTabAdd>
      </FileTabs>
      <Workspace />
      <BottomBar>
        <LayoutTabs>
          <LayoutTab $w={58} $active>Model</LayoutTab>
          <LayoutTab $w={117}>Plan Section Roof</LayoutTab>
          <LayoutTab $w={76}>Elevations</LayoutTab>
          <LayoutTab $w={28} aria-label="New layout"><Plus /></LayoutTab>
        </LayoutTabs>
        <Status />
      </BottomBar>
      <Taskbar>
        <TaskButton>
          <Icon w={32} stroke="none"><path d="M0 0h32v32H0z" fill="#fdeeea" /><g transform="translate(5 3)"><ALogo s={23} /></g></Icon>
          Autodesk AutoCAD 20...
        </TaskButton>
      </Taskbar>
    </Shell>
  );
}
